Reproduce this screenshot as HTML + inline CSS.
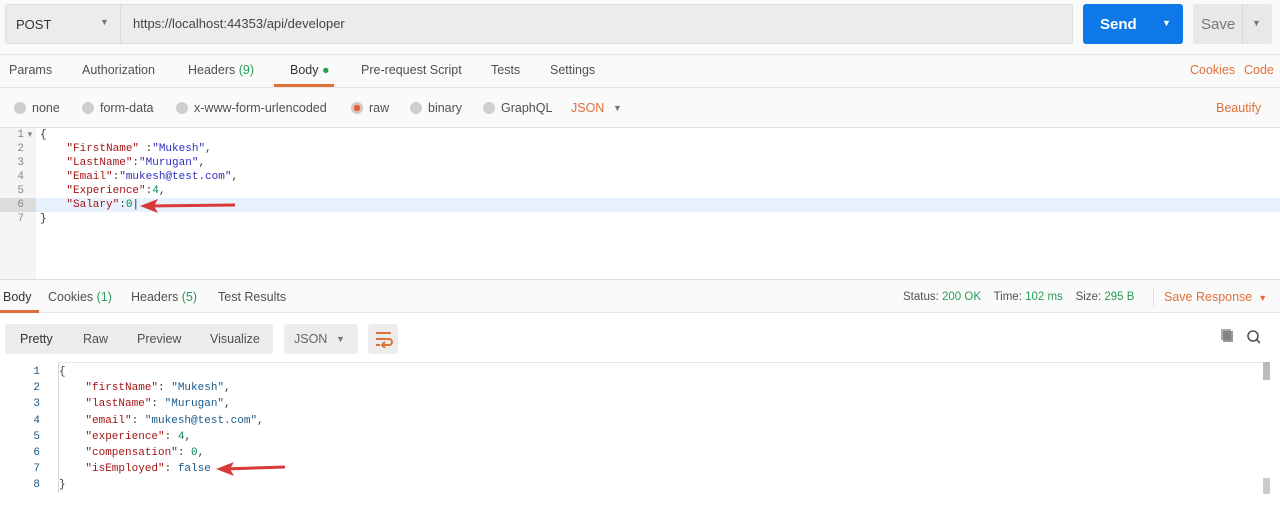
<!DOCTYPE html>
<html><head><style>
*{box-sizing:border-box;margin:0;padding:0}
body{width:1280px;height:514px;background:#fff;font-family:"Liberation Sans",sans-serif;font-size:12.5px;color:#505050;position:relative;overflow:hidden}
.a{position:absolute;white-space:nowrap}
.mono{font-family:"Liberation Mono",monospace;font-size:11px}
.k{color:#a31515}.s{color:#3030c0}.n{color:#098658}
.rk{color:#a31515}.rs{color:#1a5a8a}.rn{color:#098658}
.dot{display:inline-block;width:12px;height:12px;border-radius:50%;background:#cfcfcf;vertical-align:-2px;margin-right:6px}
.g{color:#2a9a5a}
.or{color:#e0703a}
</style></head><body>
<div class="a" style="left:0;top:0;width:1280px;height:128px;background:#fafafa"></div>
<div class="a" style="top:4px;left:5px;width:1068px;height:40px;background:#ececec;border:1px solid #ddd;border-radius:3px"></div>
<div class="a" style="left:120px;top:5px;width:1px;height:38px;background:#ddd"></div>
<div class="a" style="left:16px;top:17px;font-size:13px;color:#333">POST</div>
<div class="a" style="left:100px;top:17px;font-size:9px;color:#777">▼</div>
<div class="a" style="left:133px;top:16px;font-size:13px;color:#444">https://localhost:44353/api/developer</div>
<div class="a" style="left:1083px;top:4px;width:100px;height:40px;background:#0f78e8;border-radius:3px"></div>
<div class="a" style="left:1100px;top:16px;font-size:15px;font-weight:bold;color:#fff">Send</div>
<div class="a" style="left:1162px;top:18px;font-size:9px;color:#fff">▼</div>
<div class="a" style="left:1193px;top:4px;width:79px;height:40px;background:#e8e8e8;border-radius:3px"></div>
<div class="a" style="left:1242px;top:4px;width:1px;height:40px;background:#d8d8d8"></div>
<div class="a" style="left:1201px;top:16px;font-size:15px;color:#777">Save</div>
<div class="a" style="left:1252px;top:18px;font-size:9px;color:#777">▼</div>
<div class="a" style="left:0;top:54px;width:1280px;height:1px;background:#e6e6e6"></div>
<div class="a" style="left:0;top:87px;width:1280px;height:1px;background:#e6e6e6"></div>
<div class="a" style="left:9px;top:63px">Params</div>
<div class="a" style="left:82px;top:63px">Authorization</div>
<div class="a" style="left:188px;top:63px">Headers <span class="g">(9)</span></div>
<div class="a" style="left:290px;top:63px;color:#333">Body <span style="color:#27a048">●</span></div>
<div class="a" style="left:274px;top:84px;width:60px;height:3px;background:#e0703a"></div>
<div class="a" style="left:361px;top:63px">Pre-request Script</div>
<div class="a" style="left:491px;top:63px">Tests</div>
<div class="a" style="left:550px;top:63px">Settings</div>
<div class="a or" style="left:1190px;top:63px">Cookies</div>
<div class="a or" style="left:1244px;top:63px">Code</div>
<div class="a" style="left:14px;top:101px"><span class="dot"></span>none</div>
<div class="a" style="left:82px;top:101px"><span class="dot"></span>form-data</div>
<div class="a" style="left:176px;top:101px"><span class="dot"></span>x-www-form-urlencoded</div>
<div class="a" style="left:351px;top:101px"><span class="dot" style="background:radial-gradient(circle,#e8603a 35%,#d8c8c0 40%)"></span>raw</div>
<div class="a" style="left:410px;top:101px"><span class="dot"></span>binary</div>
<div class="a" style="left:483px;top:101px"><span class="dot"></span>GraphQL</div>
<div class="a or" style="left:571px;top:101px">JSON</div>
<div class="a" style="left:613px;top:103px;font-size:9px;color:#777">▼</div>
<div class="a or" style="left:1216px;top:101px">Beautify</div>
<div class="a" style="left:0;top:127px;width:1280px;height:1px;background:#e0e0e0"></div>
<div class="a" style="left:0;top:128px;width:36px;height:151px;background:#f5f5f5"></div>
<div class="a" style="left:0;top:198px;width:36px;height:14px;background:#dcdcdc"></div>
<div class="a" style="left:36px;top:198px;width:1244px;height:14px;background:#e8f2ff"></div>
<div class="a mono" style="left:0;top:128px;width:24px;text-align:right;line-height:14px;color:#888">1<br>2<br>3<br>4<br>5<br>6<br>7</div>
<div class="a" style="left:26px;top:128px;font-size:8px;color:#888;line-height:14px">▼</div>
<div class="a mono" style="left:40px;top:128px;line-height:14px;color:#333;white-space:pre">{
    <span class="k">"FirstName"</span> :<span class="s">"Mukesh"</span>,
    <span class="k">"LastName"</span>:<span class="s">"Murugan"</span>,
    <span class="k">"Email"</span>:<span class="s">"mukesh@test.com"</span>,
    <span class="k">"Experience"</span>:<span class="n">4</span>,
    <span class="k">"Salary"</span>:<span class="n">0</span>|
}</div>
<svg class="a" style="left:138px;top:198px" width="100" height="16"><line x1="10" y1="8" x2="97" y2="7" stroke="#d83a3a" stroke-width="3"/><polygon points="2,8 20,1 16,8 20,15" fill="#d83a3a"/></svg>
<div class="a" style="left:0;top:279px;width:1280px;height:1px;background:#ddd"></div>
<div class="a" style="left:0;top:280px;width:1280px;height:33px;background:#fafafa"></div>
<div class="a" style="left:0;top:312px;width:1280px;height:1px;background:#e6e6e6"></div>
<div class="a" style="left:3px;top:290px;color:#333">Body</div>
<div class="a" style="left:0;top:310px;width:39px;height:3px;background:#e0703a"></div>
<div class="a" style="left:48px;top:290px">Cookies <span class="g">(1)</span></div>
<div class="a" style="left:131px;top:290px">Headers <span class="g">(5)</span></div>
<div class="a" style="left:218px;top:290px">Test Results</div>
<div class="a" style="left:903px;top:291px;font-size:11.5px">Status: <span class="g">200 OK</span>&nbsp;&nbsp;&nbsp; Time: <span class="g">102 ms</span>&nbsp;&nbsp;&nbsp; Size: <span class="g">295 B</span></div>
<div class="a" style="left:1153px;top:288px;width:1px;height:18px;background:#e0e0e0"></div>
<div class="a or" style="left:1164px;top:290px">Save Response <span style="font-size:9px">&nbsp;▼</span></div>
<div class="a" style="left:5px;top:324px;width:268px;height:30px;background:#ececec;border-radius:3px"></div>
<div class="a" style="left:20px;top:332px;color:#333">Pretty</div>
<div class="a" style="left:83px;top:332px">Raw</div>
<div class="a" style="left:137px;top:332px">Preview</div>
<div class="a" style="left:210px;top:332px">Visualize</div>
<div class="a" style="left:284px;top:324px;width:74px;height:30px;background:#ececec;border-radius:3px"></div>
<div class="a" style="left:294px;top:332px;color:#666">JSON</div>
<div class="a" style="left:336px;top:334px;font-size:9px;color:#777">▼</div>
<div class="a" style="left:368px;top:324px;width:30px;height:30px;background:#ececec;border-radius:3px"></div>
<svg class="a" style="left:374px;top:330px" width="20" height="18"><path d="M2 3H17M2 9H15a3 3 0 0 1 0 6H9M2 15H6M11 12l-3 3 3 3" fill="none" stroke="#e0703a" stroke-width="2"/></svg>
<svg class="a" style="left:1220px;top:329px" width="40" height="18"><rect x="3" y="2" width="10" height="11" fill="#999"/><rect x="1" y="0" width="10" height="11" fill="#777" opacity=".6"/><circle cx="33" cy="7" r="5" fill="none" stroke="#555" stroke-width="1.6"/><line x1="36.5" y1="10.5" x2="40" y2="14" stroke="#555" stroke-width="1.8"/></svg>
<div class="a" style="left:58px;top:362px;width:1204px;height:1px;background:#e6e6e6"></div>
<div class="a" style="left:58px;top:363px;width:1px;height:130px;background:#d8d8d8"></div>
<div class="a" style="left:1263px;top:362px;width:7px;height:18px;background:#bbb"></div>
<div class="a" style="left:1263px;top:478px;width:7px;height:16px;background:#ccc"></div>
<div class="a mono" style="left:0;top:364px;width:40px;text-align:right;line-height:16.2px;color:#1a5a8a">1<br>2<br>3<br>4<br>5<br>6<br>7<br>8</div>
<div class="a mono" style="left:59px;top:364px;line-height:16.2px;color:#333;white-space:pre">{
    <span class="rk">"firstName"</span>: <span class="rs">"Mukesh"</span>,
    <span class="rk">"lastName"</span>: <span class="rs">"Murugan"</span>,
    <span class="rk">"email"</span>: <span class="rs">"mukesh@test.com"</span>,
    <span class="rk">"experience"</span>: <span class="rn">4</span>,
    <span class="rk">"compensation"</span>: <span class="rn">0</span>,
    <span class="rk">"isEmployed"</span>: <span class="rs">false</span>
}</div>
<svg class="a" style="left:214px;top:460px" width="75" height="18"><line x1="10" y1="9" x2="71" y2="7" stroke="#d83a3a" stroke-width="3"/><polygon points="2,9 20,2 16,9 20,16" fill="#d83a3a"/></svg>
</body></html>
